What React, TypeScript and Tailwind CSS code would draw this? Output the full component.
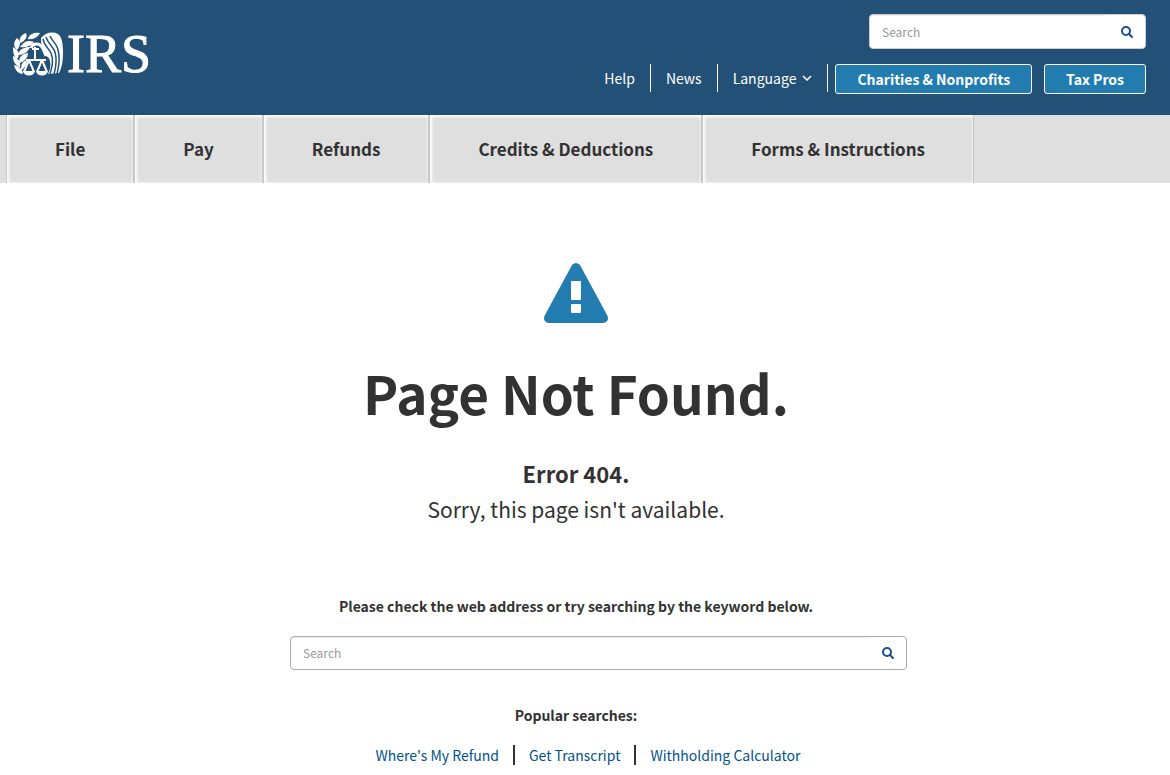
import type { FormEvent } from 'react';

const navItems = ['File', 'Pay', 'Refunds', 'Credits & Deductions', 'Forms & Instructions'];

const popularSearches = ["Where's My Refund", 'Get Transcript', 'Withholding Calculator'];

function EagleLogo() {
  return (
    <svg className="h-11 w-[50px] shrink-0" viewBox="0 0 50 44" fill="none" aria-hidden="true">
      {/* laurel branch */}
      <g fill="#fff">
        <path d="M15 6C17 2 21 0 27 1C25 5 20 8 15 7Z" />
        <path d="M7 10C6 6 8 3 13 1C15 5 12 9 7 11Z" />
        <path d="M8 14C11 9 16 8 21 10C18 14 13 16 7 15Z" />
        <path d="M3 17C0 13 1 9 4 6C8 9 8 13 4 18Z" />
        <path d="M5 22C7 17 11 15 17 15C15 20 11 23 5 23Z" />
        <path d="M3 26C0 23 0 18 0 15C5 18 7 21 5 26Z" />
        <path d="M6 30C6 25 9 22 15 21C15 26 11 30 6 31Z" />
        <path d="M6 35C1 32 0 28 0 24C5 26 8 30 7 35Z" />
        <path d="M8 37C8 32 10 29 14 28C14 32 12 35 9 38Z" />
        <path d="M9 42C4 41 2 37 1 33C6 34 9 37 10 41Z" />
      </g>
      {/* wing with its feathers */}
      <path
        fill="#fff"
        d="M28 6C32 1 39 -1 45 2C49 5 50 12 50 20C50 28 49 36 46 41L35 42C38 36 38 31 36 26C30 22 28 16 28 6Z"
      />
      <g stroke="#235076" strokeWidth="1.500">
        <path d="M30 7C31 14 36 16 38 21C41 28 39 35 37 42" />
        <path d="M33 5C35 12 40 14 42 20C44 27 43 35 41 42" />
        <path d="M37 4C39 9 44 12 45 18C47 25 46 34 44 42" />
      </g>
      {/* head and neck */}
      <path stroke="#fff" strokeWidth="3" d="M18 16C19 12 24 11 27 13C30 15 31 19 33 24" />
      {/* scales */}
      <g stroke="#fff" strokeWidth="2">
        <path d="M22 15V29M19 17H26M13 28H33M16 28L11 40M16 28L21 40M29 28L24 40M29 28L34 40" />
      </g>
      <path fill="#fff" d="M10 39H22C21 45 11 45 10 39ZM23 39H35C34 45 24 45 23 39Z" />
    </svg>
  );
}

function SearchIcon() {
  return (
    <svg className="size-3" viewBox="0 0 12 12" fill="none" stroke="#1b4f91" strokeWidth="2" aria-hidden="true">
      <circle cx="5" cy="5" r="4" />
      <path d="M8 8L11 11" strokeLinecap="round" />
    </svg>
  );
}

function WarningIcon() {
  return (
    <svg className="h-[60px] w-16" viewBox="0 0 64 60" aria-hidden="true">
      <path
        fill="#227cb0"
        fillRule="evenodd"
        d="M28 2C30 -0.5 34 -0.5 36 2L63 52C65.500 56 63 60 59 60H5C1 60 -1.500 56 1 52ZM28 18Q27 18 27 19V36Q27 37 28 37H36Q37 37 37 36V19Q37 18 36 18ZM28 41Q27 41 27 42V49Q27 50 28 50H36Q37 50 37 49V42Q37 41 36 41Z"
      />
    </svg>
  );
}

type SearchFormProps = {
  id: string;
  className: string;
};

function SearchForm({ id, className }: SearchFormProps) {
  return (
    <form
      role="search"
      className={`flex overflow-hidden rounded-[4px] border bg-white ${className}`}
      onSubmit={(e: FormEvent) => e.preventDefault()}
    >
      <input
        id={id}
        type="text"
        placeholder="Search"
        aria-label="Search"
        className="min-w-0 flex-1 px-3 text-[12px] text-[#323232] shadow-[inset_0_1px_1px_rgba(0,0,0,0.075)] outline-none placeholder:text-[#999]"
      />
      <button type="submit" aria-label="Search" className="flex w-10 items-center justify-center pl-1">
        <SearchIcon />
      </button>
    </form>
  );
}

function Header() {
  return (
    <header className="flex h-[115px] items-start justify-between bg-[#235076] pr-6 pl-[13px] text-white">
      <a href="#home" aria-label="IRS home" className="mt-8 flex h-11 items-center gap-1">
        <EagleLogo />
        <span className="font-['Liberation_Serif',serif] text-[54px] leading-[44px] [-webkit-text-stroke:1px_#fff]">IRS</span>
      </a>
      <div className="flex flex-col items-end gap-[15px] pt-[14px]">
        <SearchForm id="site-search" className="h-[35px] w-[277px] border-[#ccc]" />
        <div className="flex items-start">
          <ul className="flex text-[14px] leading-7">
            <li className="border-r border-white px-[15px]">
              <a href="#help">Help</a>
            </li>
            <li className="border-r border-white px-[15px]">
              <a href="#news">News</a>
            </li>
            <li className="border-r border-white px-[15px]">
              <button type="button" className="flex items-center gap-[6px]">
                Language
                <svg className="h-[6px] w-[10px]" viewBox="0 0 10 6" fill="none" stroke="#fff" strokeWidth="1.500" aria-hidden="true">
                  <path d="M1 1L5 5L9 1" />
                </svg>
              </button>
            </li>
          </ul>
          <a href="#charities" className="ml-[7px] rounded-[3px] border border-white bg-[#227cb0] px-[21px] text-[14px] leading-7 font-bold">
            Charities &amp; Nonprofits
          </a>
          <a href="#tax-pros" className="ml-3 rounded-[3px] border border-white bg-[#227cb0] px-[21px] text-[14px] leading-7 font-bold">
            Tax Pros
          </a>
        </div>
      </div>
    </header>
  );
}

function App() {
  return (
    <div className="min-h-screen bg-white font-['Noto_Sans_CJK_SC','Noto_Sans',sans-serif] text-[#323232]">
      <Header />

      {/* Navigation */}
      <nav className="bg-[#dfdfdf] pl-[6px]">
        <ul className="flex">
          {navItems.map((item) => (
            <li key={item} className="border-x border-[#c8c8c8]">
              <a
                href="#nav"
                className="block px-12 text-[17px] leading-[68px] font-bold shadow-[inset_1px_1px_3px_1px_#fff]"
              >
                {item}
              </a>
            </li>
          ))}
        </ul>
      </nav>

      {/* Main content */}
      <main className="flex flex-col items-center pt-20 pr-[18px] text-center">
        <WarningIcon />
        <h1 className="mt-[33px] text-[53px] leading-[72px] font-bold">Page Not Found.</h1>
        <h2 className="mt-[27px] text-[22px] leading-9 font-bold">Error 404.</h2>
        <p className="text-[21px] leading-9">Sorry, this page isn't available.</p>
        <label htmlFor="page-search" className="mt-[67px] text-[14px] leading-6 font-bold">
          Please check the web address or try searching by the keyword below.
        </label>
        <div className="mt-[18px] flex w-full justify-center pl-[45px]">
          <SearchForm id="page-search" className="h-[34px] w-[617px] border-[#aaa]" />
        </div>
        <h3 className="mt-[33px] text-[14px] leading-6 font-bold">Popular searches:</h3>
        <ul className="mt-[18px] flex pl-6 text-[14px] leading-5 text-[#00538a]">
          {popularSearches.map((search) => (
            <li key={search} className="border-r-2 border-[#323232] px-[14px] last:border-r-0">
              <a href="#search">{search}</a>
            </li>
          ))}
        </ul>
      </main>
    </div>
  );
}

export default App;
